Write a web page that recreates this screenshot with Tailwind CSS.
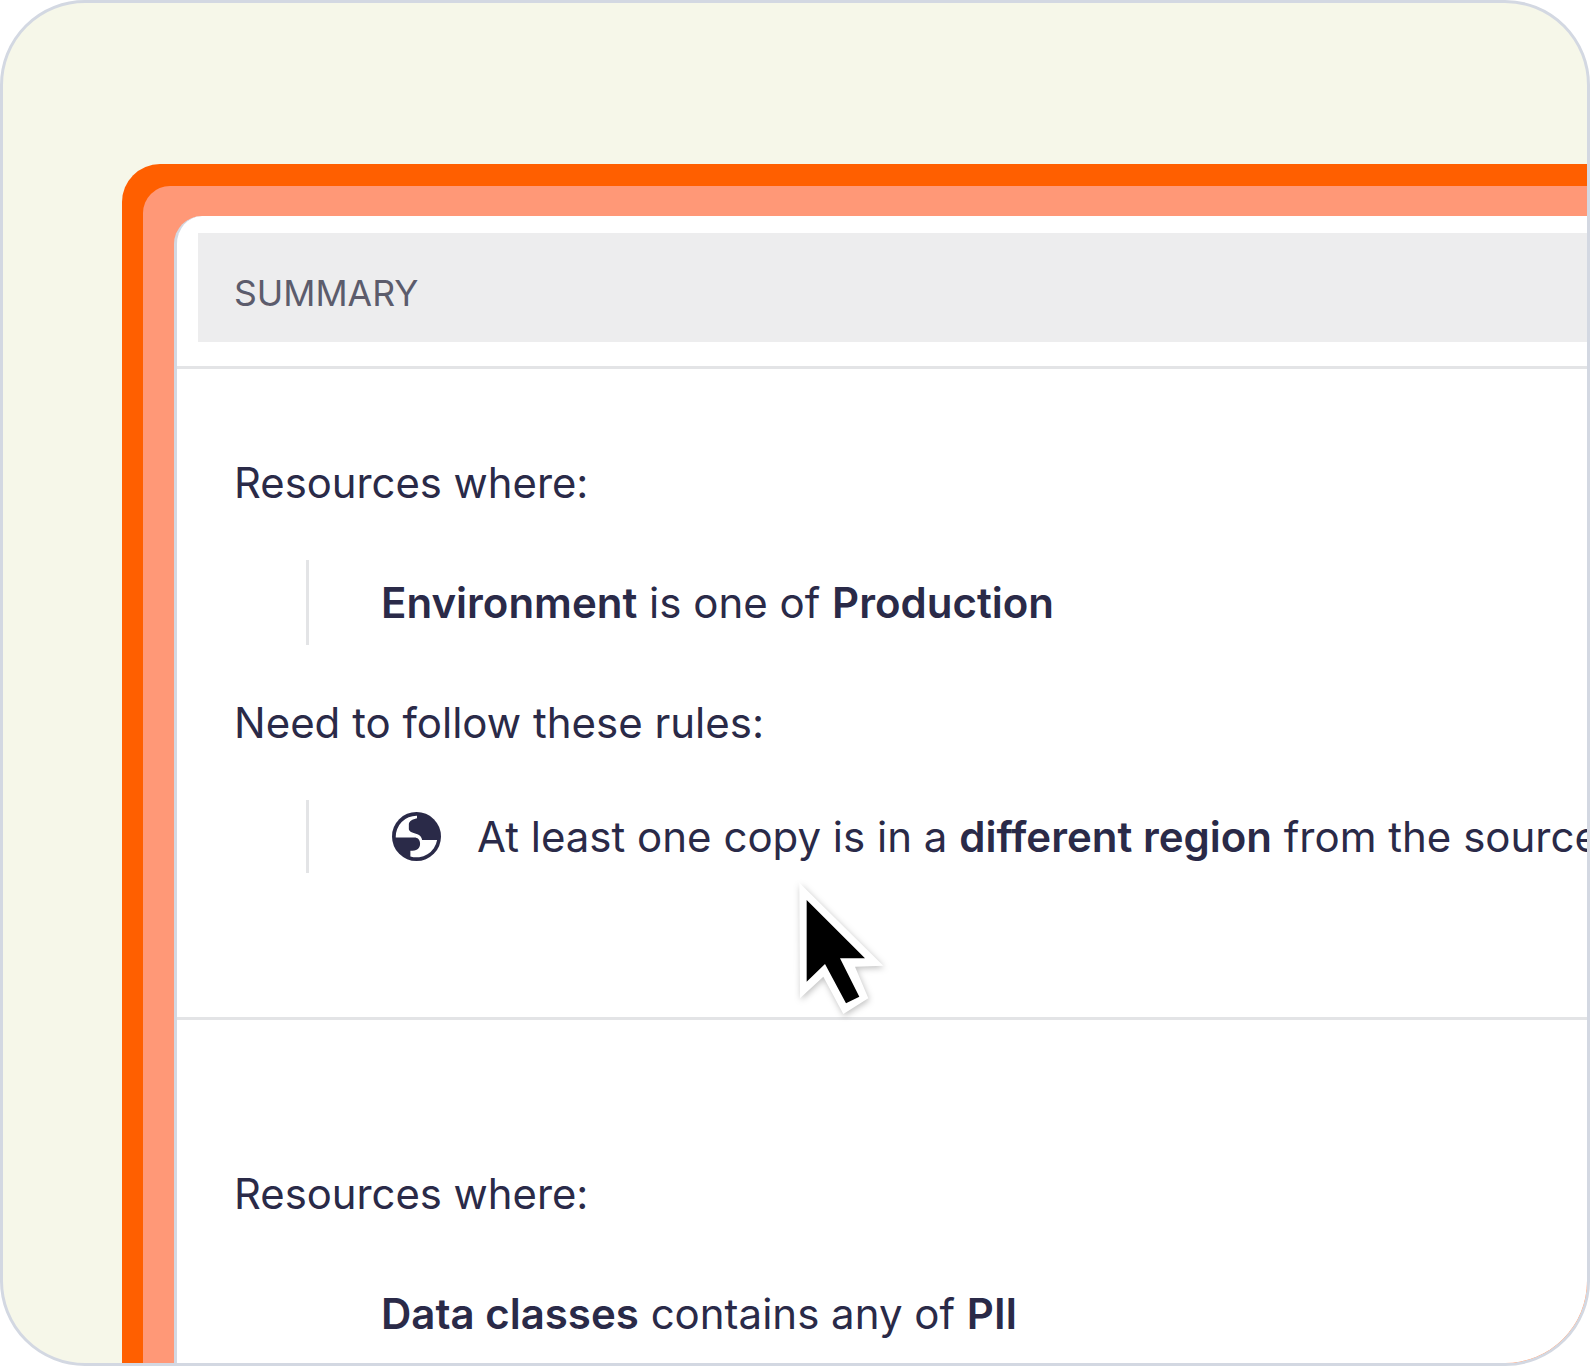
<!DOCTYPE html>
<html lang="en">

<head>
    <meta charset="UTF-8">
    <title>Summary</title>
    <script src="https://cdn.jsdelivr.net/npm/@tailwindcss/browser@4"></script>
</head>

<body class="bg-white font-['Inter',sans-serif] text-[#2a2a48]">
    <div class="relative w-[1590px] h-[1366px] overflow-hidden">
        <div class="h-full rounded-[85px] border-[3px] border-[#d3d8e2] bg-[#f6f7e9] overflow-hidden pt-[161px] pl-[119px]">
            <div class="h-[1300px] rounded-tl-[38px] bg-[#ff5f00] pt-[22px] pl-[21px]">
                <div class="h-full rounded-tl-[27px] bg-[#ff9877] pt-[30px] pl-[31px]">
                    <div class="h-full rounded-tl-[28px] border-l-[3px] border-[#d3d8e2] bg-white">
                        <div class="pt-[17px] pl-[21px] pb-[24px] border-b-[3px] border-[#e3e4e6]">
                            <div class="h-[109px] flex items-center pl-[36px] pt-[12px] bg-[#ededee] text-[35.6px] text-[#5c5c6c]">SUMMARY</div>
                        </div>
                        <div class="h-[651px] border-b-[3px] border-[#e3e4e6] pt-[89px] pl-[57px] text-[42px] leading-[50px] whitespace-nowrap">
                            <p class="text-[41.8px]">Resources where:</p>
                            <div class="mt-[52px] ml-[72px] h-[85px] border-l-[3px] border-[#e3e4e6] pl-[72px] flex items-center">
                                <p><b class="font-semibold">Environment</b> is one of <b class="font-semibold">Production</b></p>
                            </div>
                            <p class="mt-[53px]">Need to follow these rules:</p>
                            <div class="mt-[52px] ml-[72px] h-[73px] border-l-[3px] border-[#e3e4e6] pl-[83px] flex items-center gap-[36px]">
                                <svg class="w-[49px] h-[49px] shrink-0" viewBox="0 0 48 48">
                                    <circle cx="24" cy="24" r="24" fill="#2a2a48" />
                                    <path fill="#fff" d="M3.7 25 A20.4 20.4 0 0 1 24.5 3.6 L24.5 6 C20 7 16.5 9 16.5 12 L16.5 17 C17 20 22 21 25.5 22 C28 23 29 25 29.5 27.5 L44.2 27.5 A20.4 20.4 0 0 1 18 43.5 L18 38 C24 38 27.5 36 27.5 31 C27.5 27 25 25 22 25 Z" />
                                </svg>
                                <p>At least one copy is in a <b class="font-semibold">different region</b> from the source</p>
                            </div>
                        </div>
                        <div class="pt-[149px] pl-[57px] text-[42px] leading-[50px] whitespace-nowrap">
                            <p class="text-[41.8px]">Resources where:</p>
                            <p class="mt-[70px] ml-[147px]"><b class="font-semibold">Data classes</b> contains any of <b class="font-semibold">PII</b></p>
                        </div>
                    </div>
                </div>
            </div>
        </div>
        <!-- cursor -->
        <svg class="absolute left-[780px] top-[870px] w-[120px] h-[160px] drop-shadow-[1px_2px_3px_rgba(0,0,0,0.25)]" viewBox="0 0 360 480">
            <path fill="#fff" d="M58 38 L310 287 L225 290 L265 385 L190 432 L130 320 L60 385 Z" />
            <path fill="#000" d="M80 90 L255 265 L180 265 L238 380 L198 400 L135 282 L80 335 Z" />
        </svg>
    </div>
</body>

</html>
